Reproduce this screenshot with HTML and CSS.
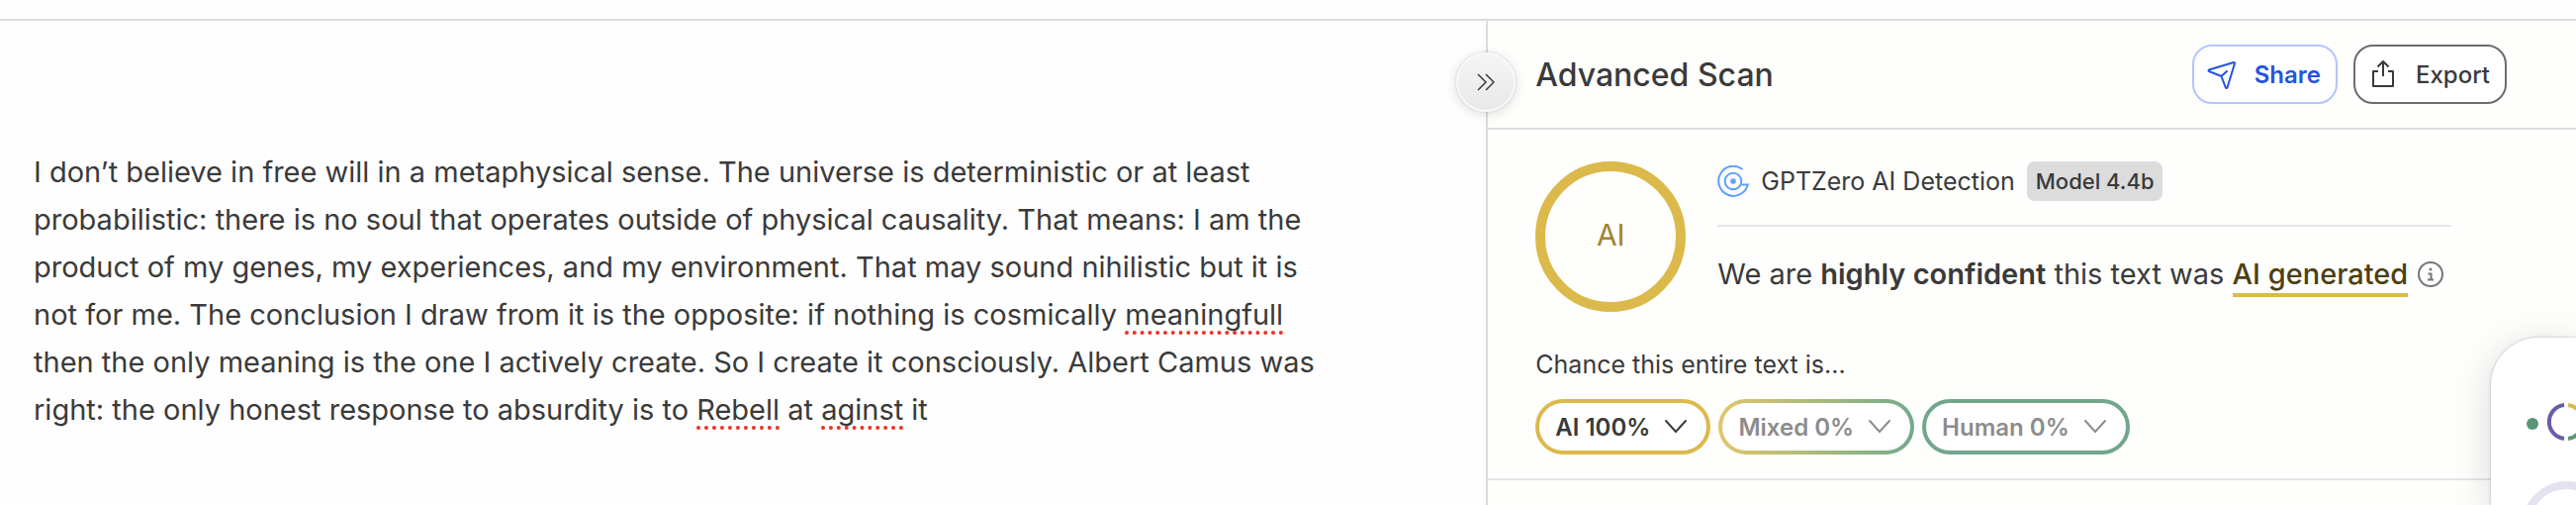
FILE: index.html
```html
<!DOCTYPE html>
<html lang="en">
<head>
  <meta charset="UTF-8">
  <meta name="viewport" content="width=device-width, initial-scale=1.0">
  <title>Advanced Scan</title>
  <link rel="stylesheet" href="styles.css">
</head>
<body>
  <div class="topbar"></div>
  <main class="layout">
    <section class="editor">
      <p class="document">
        I don’t believe in free will in a metaphysical sense. The universe is deterministic or at least<br>
        probabilistic: there is no soul that operates outside of physical causality. That means: I am the<br>
        product of my genes, my experiences, and my environment. That may sound nihilistic but it is<br>
        not for me. The conclusion I draw from it is the opposite: if nothing is cosmically <span class="typo">meaningfull</span><br>
        then the only meaning is the one I actively create. So I create it consciously. Albert Camus was<br>
        right: the only honest response to absurdity is to <span class="typo">Rebell</span> at <span class="typo">aginst</span> it
      </p>
    </section>

    <aside class="panel">
      <button class="collapse" aria-label="Collapse panel">
        <svg width="18" height="18" viewBox="0 0 18 18" fill="none" stroke="currentColor" stroke-width="1.5">
          <path d="M1 1l8 8-8 8M9 1l8 8-8 8"/>
        </svg>
      </button>

      <header class="panel-header">
        <h1 class="title">Advanced Scan</h1>
        <div class="actions">
          <button class="btn share">
            <svg width="32" height="32" viewBox="0 0 32 32" fill="none" stroke="currentColor" stroke-width="2" stroke-linejoin="round" stroke-linecap="round">
              <path d="M3 11.500L28 4a.8.8 0 0 1 1 1L21.500 29.500a.9.9 0 0 1-1.700 0L15.500 18 3 13a.8.8 0 0 1 0-1.500zM15.500 18l5.500-5"/>
            </svg>
            Share
          </button>
          <button class="btn export">
            <svg width="32" height="32" viewBox="0 0 32 32" fill="none" stroke="currentColor" stroke-width="2" stroke-linejoin="round">
              <path d="M11 13H6v15h20V13h-5M16 18V3M10.500 8.500L16 3l5.500 5.500"/>
            </svg>
            Export
          </button>
        </div>
      </header>

      <section class="result">
        <div class="summary">
          <div class="score">AI</div>
          <div class="details">
            <div class="detector">
              <svg width="32" height="32" viewBox="0 0 32 32" fill="none" stroke="#60a0ff" stroke-width="2">
                <path d="M25.500 4A15 15 0 1 0 30.800 19.500H24.500"/>
                <circle cx="16" cy="16" r="8.300"/>
                <circle cx="16" cy="16" r="2.800" fill="#60a0ff" stroke="none"/>
              </svg>
              <span class="detector-name">GPTZero AI Detection</span>
              <span class="model">Model 4.4b</span>
            </div>
            <p class="verdict">
              <span>We are <strong>highly confident</strong> this text was <a class="ai-link" href="#">AI generated</a></span>
              <svg width="26" height="26" viewBox="0 0 26 26" fill="none" stroke="#767676" stroke-width="2">
                <circle cx="13" cy="13" r="12"/>
                <path d="M10.500 12.500H13.500V18M10 18.500h6"/>
                <circle cx="13" cy="8" r="1.500" fill="#767676" stroke="none"/>
              </svg>
            </p>
          </div>
        </div>

        <p class="chance">Chance this entire text is...</p>
        <div class="pills">
          <button class="pill ai">AI 100%
            <svg width="24" height="16" viewBox="0 0 24 16" fill="none" stroke="currentColor" stroke-width="2" stroke-linecap="round"><path d="M2 2l10 11L22 2"/></svg>
          </button>
          <button class="pill mixed">Mixed 0%
            <svg width="24" height="16" viewBox="0 0 24 16" fill="none" stroke="currentColor" stroke-width="2" stroke-linecap="round"><path d="M2 2l10 11L22 2"/></svg>
          </button>
          <button class="pill human">Human 0%
            <svg width="24" height="16" viewBox="0 0 24 16" fill="none" stroke="currentColor" stroke-width="2" stroke-linecap="round"><path d="M2 2l10 11L22 2"/></svg>
          </button>
        </div>
      </section>
    </aside>
  </main>

  <!-- Floating widget, runs off the corner of the window -->
  <div class="widget">
    <svg width="86" height="169" viewBox="0 0 86 169" fill="none">
      <circle cx="42" cy="87" r="6" fill="#5a9675"/>
      <path d="M74 68.100A17 17 0 0 0 74 101.900" stroke="#675da8" stroke-width="4"/>
      <path d="M78 68.100A17 17 0 0 1 93 85" stroke="#dcb94b" stroke-width="4"/>
      <path d="M93 85A17 17 0 0 1 78 101.900" stroke="#5a9675" stroke-width="4"/>
      <circle cx="76" cy="189" r="40" stroke="#e3e2ef" stroke-width="8"/>
    </svg>
  </div>
</body>
</html>
```
FILE: styles.css
```css
* {
  box-sizing: border-box;
}

body {
  font-family: Inter, sans-serif;
  margin: 0;
  min-height: 100vh;
  display: flex;
  flex-direction: column;
  overflow: hidden;
  background-color: #fefefe;
  color: #3a3a3a;
}

h1,
p {
  margin: 0;
}

button {
  font-family: inherit;
  cursor: pointer;
}

.topbar {
  height: 21px;
  border-bottom: 2px solid #dcdcdc;
}

.layout {
  flex: 1;
  display: grid;
  grid-template-columns: 15fr 11fr;
}

/* Editor */
.editor {
  padding: 129px 32px 48px 34px;
}

.document {
  font-size: 29px;
  line-height: 48px;
  white-space: nowrap;
}

.typo {
  text-decoration: underline dotted #ee3124 4px;
  text-underline-offset: 6px;
  text-decoration-skip-ink: none;
}

/* Results panel */
.panel {
  position: relative;
  border-left: 2px solid #dcdcdc;
  background-color: #fefefc;
}

.collapse {
  position: absolute;
  top: 32px;
  left: -32px;
  width: 60px;
  height: 60px;
  display: flex;
  align-items: center;
  justify-content: center;
  padding: 0;
  border: 2px solid #f8f8f8;
  border-radius: 50%;
  background: linear-gradient(#f5f5f5, #e8e8e8);
  box-shadow: 0 2px 12px rgba(0, 0, 0, 0.15), 0 0 2px rgba(0, 0, 0, 0.2);
  color: #3a3a3a;
}

.panel-header {
  display: flex;
  align-items: center;
  justify-content: space-between;
  height: 110px;
  padding: 0 70px 0 48px;
  border-bottom: 2px solid #dcdcdc;
}

.title {
  font-size: 32px;
  font-weight: 500;
}

.actions {
  display: flex;
  gap: 16px;
}

.btn {
  display: flex;
  align-items: center;
  gap: 17px;
  height: 60px;
  padding: 0 15px 0 12px;
  border: 2px solid;
  border-radius: 20px;
  background-color: #fff;
  font-size: 24px;
}

.share {
  border-color: #b3c5fd;
  color: #2453e0;
  font-weight: 600;
}

.export {
  border-color: #6c6c6c;
  color: #3a3a3a;
  font-weight: 500;
}

.result {
  padding: 32px 126px 24px 48px;
  border-bottom: 2px solid #e5e5ea;
}

.summary {
  display: flex;
  gap: 32px;
}

.score {
  display: flex;
  align-items: center;
  justify-content: center;
  width: 152px;
  height: 152px;
  padding-bottom: 4px;
  border: 10px solid #dcb94b;
  border-radius: 50%;
  color: #a08530;
  font-size: 30px;
}

.details {
  flex: 1;
}

.detector {
  display: flex;
  align-items: center;
  gap: 12px;
  padding-bottom: 24px;
  border-bottom: 2px solid #e5e5ea;
  font-size: 25px;
}

.model {
  padding: 0 9px;
  border-radius: 8px;
  background-color: #dcdcdc;
  font-size: 22px;
  font-weight: 500;
  line-height: 40px;
}

.verdict {
  display: flex;
  align-items: center;
  gap: 10px;
  padding-top: 24px;
  font-size: 29px;
  line-height: 48px;
}

.verdict strong {
  font-weight: 600;
}

.ai-link {
  padding-bottom: 2px;
  border-bottom: 4px solid #dcb94b;
  color: #4d3f12;
  font-weight: 500;
  text-decoration: none;
}

.chance {
  padding-top: 37px;
  font-size: 25px;
  line-height: 32px;
}

.pills {
  display: flex;
  gap: 8px;
  padding-top: 19px;
}

.pill {
  display: flex;
  align-items: center;
  gap: 14px;
  height: 56px;
  padding: 0 19px 0 16px;
  border: 4px solid transparent;
  border-radius: 28px;
  background-color: #fff;
  color: #8c8c8c;
  font-size: 24px;
  font-weight: 600;
}

.pill.ai {
  border-color: #dcb94b;
  color: #3a3a3a;
}

.pill.mixed {
  background: linear-gradient(#fff, #fff) padding-box,
    linear-gradient(90deg, #e0c76c, #72aa8c) border-box;
}

.pill.human {
  border-color: #72a68c;
}

/* Floating widget */
.widget {
  position: absolute;
  right: 0;
  bottom: 0;
  overflow: hidden;
  border-radius: 48px 0 0 0;
  background-color: #fff;
  box-shadow: 0 0 3px rgba(0, 0, 0, 0.25), 0 8px 40px rgba(0, 0, 0, 0.15);
}

.widget svg {
  display: block;
}
```
